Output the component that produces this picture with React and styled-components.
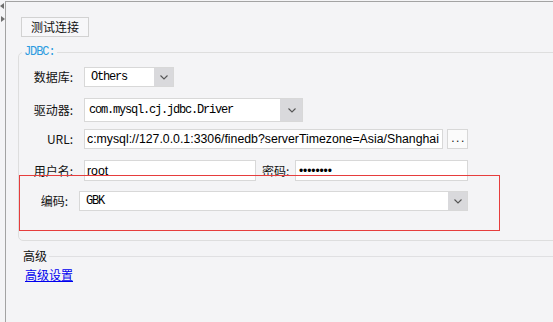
import React from "react";
import styled, { createGlobalStyle } from "styled-components";

const GlobalStyle = createGlobalStyle`
  * { box-sizing: border-box; }
  html, body { margin: 0; padding: 0; background: #f4f4f6; }
  body {
    font-family: "Noto Sans CJK SC", "Noto Sans", sans-serif;
    font-size: 12px;
    color: #111;
  }
`;

const Page = styled.div`
  display: flex;
  width: 553px;
  height: 322px;
  overflow: hidden;
`;

const SideStrip = styled.div`
  width: 5px;
  display: flex;
  flex-direction: column;
  gap: 7px;
  padding-top: 3px;
`;

const Arrow = styled.span`
  width: 0;
  height: 0;
  border-top: 3px solid transparent;
  border-bottom: 3px solid transparent;
  ${p => p.$dir === "left"
    ? "border-right: 4px solid #6f6f6f;"
    : "border-left: 4px solid #6f6f6f; margin-left: 1px;"}
`;

const Main = styled.div`
  flex: 1;
  margin-top: 1px;
  border-left: 1px solid #a3a3a3;
  border-top: 1px solid #a3a3a3;
  padding: 15px 0 0 12px;
  overflow: hidden;
`;

const TestButton = styled.button`
  display: block;
  margin-left: 3px;
  width: 68px;
  height: 20px;
  padding: 0;
  border: 1px solid #d2d2d2;
  background: #f7f7f9;
  font-family: inherit;
  font-size: 12px;
  line-height: 18px;
  color: #111;
`;

const Group = styled.fieldset`
  margin: 9px -30px 0 0;
  padding: 9px 0 29px 12px;
  border: 1px solid #dedede;
  border-radius: 5px;
  min-width: 0;
`;

const Legend = styled.legend`
  margin-left: -9px;
  padding: 0 2px;
  font-family: "Liberation Mono", monospace;
  font-size: 12px;
  line-height: 12px;
  letter-spacing: -1.1px;
  color: #2b9be0;
`;

const Row = styled.div`
  position: relative;
  display: flex;
  align-items: center;
  margin-top: ${p => p.$top || 0}px;
`;

const Label = styled.span`
  width: ${p => p.$w || 42}px;
  margin-right: 11px;
  text-align: right;
  white-space: nowrap;
  font-size: 12px;
  line-height: 16px;
  color: #111;
`;

const InlineLabel = styled.span`
  margin: 0 5px 0 6px;
  width: 28px;
  white-space: nowrap;
  font-size: 12px;
  line-height: 16px;
`;

const Box = styled.div`
  display: flex;
  align-items: center;
  width: ${p => p.$w}px;
  height: ${p => p.$h || 20}px;
  border: 1px solid #d8d8d8;
  background: #fff;
  overflow: hidden;
  white-space: nowrap;
`;

const MonoValue = styled.span`
  flex: 1;
  padding-left: ${p => p.$pad || 5}px;
  font-family: "Liberation Mono", monospace;
  font-size: 12px;
  letter-spacing: -1.2px;
  color: #000;
`;

const TextValue = styled.div`
  flex: 1;
  overflow: hidden;
  padding-left: 2px;
  font-family: "Liberation Sans", Arial, sans-serif;
  font-size: 12.3px;
  color: #000;
`;

const Dots = styled.div`
  flex: 1;
  padding-left: 3px;
  font-family: "Liberation Sans", Arial, sans-serif;
  font-size: 12px;
  letter-spacing: -0.1px;
  color: #000;
`;

const DropButton = styled.div`
  align-self: stretch;
  width: ${p => p.$w || 20}px;
  margin: -1px -1px -1px 0;
  display: flex;
  align-items: center;
  justify-content: center;
  background: #d9d9dc;
`;

const MoreButton = styled.div`
  width: 21px;
  height: 20px;
  margin-left: 4px;
  border: 1px solid #d8d8d8;
  background: #fbfbfb;
  text-align: center;
  font-family: "Liberation Sans", Arial, sans-serif;
  font-size: 12px;
  line-height: 16px;
  letter-spacing: 1.5px;
  padding-left: 2px;
`;

const Annotation = styled.div`
  position: absolute;
  left: -12px;
  top: -16px;
  width: 481px;
  height: 56px;
  border: 1px solid #e63d3d;
  pointer-events: none;
`;

const AdvancedHeader = styled.div`
  display: flex;
  align-items: center;
  margin-top: 7px;
  height: 16px;
`;

const AdvancedTitle = styled.span`
  margin-left: 5px;
  font-size: 12px;
  line-height: 16px;
`;

const Rule = styled.div`
  flex: 1;
  height: 1px;
  margin-left: 2px;
  background: #e0e0e2;
`;

const Link = styled.a`
  display: inline-block;
  margin: 3px 0 0 7px;
  font-size: 12px;
  line-height: 16px;
  color: #0000ee;
  text-decoration: underline;
`;

const Chevron = () => (
  <svg width="8" height="5" viewBox="0 0 8 5">
    <polyline points="0.5,0.5 4,4 7.5,0.5" fill="none" stroke="#555" strokeWidth="1.1" />
  </svg>
);

const Select = ({ width, height, value, buttonWidth, pad }) => (
  <Box $w={width} $h={height}>
    <MonoValue $pad={pad}>{value}</MonoValue>
    <DropButton $w={buttonWidth}>
      <Chevron />
    </DropButton>
  </Box>
);

export default function App() {
  return (
    <>
      <GlobalStyle />
      <Page>
        <SideStrip>
          <Arrow $dir="left" />
          <Arrow $dir="right" />
        </SideStrip>
        <Main>
          <TestButton>测试连接</TestButton>
          <Group>
            <Legend>JDBC:</Legend>
            <Row>
              <Label>数据库:</Label>
              <Select width={90} value="Others" pad={6} />
            </Row>
            <Row $top={11}>
              <Label>驱动器:</Label>
              <Select width={219} height={24} buttonWidth={23} value="com.mysql.cj.jdbc.Driver" pad={4} />
            </Row>
            <Row $top={7}>
              <Label>URL:</Label>
              <Box $w={359}>
                <TextValue>c:mysql://127.0.0.1:3306/finedb?serverTimezone=Asia/Shanghai</TextValue>
              </Box>
              <MoreButton>...</MoreButton>
            </Row>
            <Row $top={11}>
              <Label>用户名:</Label>
              <Box $w={172} $h={21}>
                <TextValue>root</TextValue>
              </Box>
              <InlineLabel>密码:</InlineLabel>
              <Box $w={173} $h={21}>
                <Dots>••••••••</Dots>
              </Box>
            </Row>
            <Row $top={10}>
              <Annotation />
              <Label $w={37}>编码:</Label>
              <Select width={389} value="GBK" pad={6} />
            </Row>
          </Group>
          <AdvancedHeader>
            <AdvancedTitle>高级</AdvancedTitle>
            <Rule />
          </AdvancedHeader>
          <Link href="#">高级设置</Link>
        </Main>
      </Page>
    </>
  );
}
